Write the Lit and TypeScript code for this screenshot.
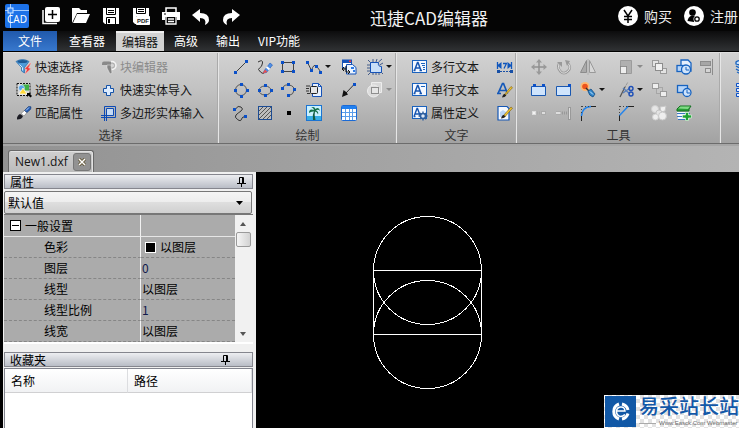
import { LitElement, html, css, svg, nothing, TemplateResult } from "lit";
import { customElement, property } from "lit/decorators.js";
import { classMap } from "lit/directives/class-map.js";

const B = "#0b50c8";
const dots = (pts: number[][]) =>
  pts.map(([x, y]) => svg`<rect x=${x - 1.5} y=${y - 1.5} width="3" height="3" fill=${B}/>`);
const caret = svg`<path d="M0 6h6l-3 3z" fill="currentColor"/>`;

const icons: Record<string, TemplateResult> = {
  filter: svg`<path d="M0 2.500q6.500-4 13 0L8.500 8.500V14l-3-2V8.500z" fill="#4f9bd9" stroke="#2569a8" stroke-width=".7"/><ellipse cx="6.500" cy="2.500" rx="5" ry="1.500" fill="#1e5a94"/><path d="M3.500 5.500l3 3v3" fill="none" stroke="#cdeaff"/><path d="M14.500 4L8.500 10l2.500.5L8.500 15.500l6.500-6-2.500-.5 2.500-5z" fill="#f03838" stroke="#ffd0d0" stroke-width=".4"/>`,
  selectAll: svg`<rect x="1" y="1.500" width="13" height="12" fill="#d8d8d8" stroke="#111" stroke-dasharray="2 1"/><rect x="6" y="2.500" width="7" height="6" fill="#3fb045"/><circle cx="5.500" cy="6" r="3" fill="#58a6e8" stroke="#fff" stroke-width=".5"/><path d="M3 12l4-6 4 6z" fill="#ffd93a" stroke="#fff" stroke-width=".7"/><path d="M11 11h4l-1 1 2 2-1.500 1.500-2-2L11 15z" fill="#000"/>`,
  match: svg`<path d="M1 14.500q-.5-3.500 3-5.500l3 2q-1 3.500-6 3.500z" fill="#1c1c24"/><path d="M5 8.500l3.500-3 2.500 2-3 3.500z" fill="#fff" stroke="#777" stroke-width=".6"/><path d="M8.500 5.500L12.500 1.500l2.500.3-.3 2.400L11 7.500z" fill="#245cb4" stroke="#12356d" stroke-width=".6"/><path d="M10 5.500l3-3" stroke="#b5d5ff"/>`,
  block: svg`<circle cx="11" cy="6.500" r="4" fill="#d5d5d5" stroke="#f4f4f4" stroke-width="1.500"/><circle cx="11" cy="6.500" r="2.500" fill="none" stroke="#aaa"/><path d="M1 4.500q0-2 2-2h7V6H1z" fill="#8a8a8a"/><path d="M6 6h4l1 8-2 1-3-6z" fill="#858585" stroke="#eee" stroke-width=".5"/>`,
  plus: svg`<path d="M5.500 3.500h4v3h3v4h-3v3h-4v-3h-3v-4h3z" fill="#dcecff" stroke="#1552a8"/>`,
  polyIn: svg`<rect x="5.500" y="3.500" width="7" height="7" fill="#c6dbf5"/><path d="M3.500 16V1.500h11v11H0M0 10.500h12.500v-7h-7V16" fill="none" stroke="#0c4ab5"/>`,
  line: svg`<path d="M3 13L13 3" stroke="#444"/>${dots([[2.500, 13.500], [13.500, 2.500]])}`,
  sketch: svg`<path d="M1 3q5-3 4.500 1t-3 5 1 4 4-.5" fill="none" stroke="#333"/><path d="M7 12l6-8 2.500 2-6 7.500-3 .5z" fill="#5090e8" stroke="#1d58b4" stroke-width=".6"/><path d="M9.500 8l3 2.500" stroke="#fff" stroke-width="2"/><path d="M5.500 14.500L8 10.500l2.500 2.500z" fill="#e85050"/>`,
  rect: svg`<rect x="2.500" y="3.500" width="11" height="9" fill="none" stroke="#444"/>${dots([[2.500, 3.500], [13.500, 3.500], [2.500, 12.500], [13.500, 12.500]])}`,
  pline: svg`<path d="M1.500 3.500l4 8q2-7 5-4.500l4 5.500" fill="none" stroke="#444"/>${dots([[1.500, 3.500], [5.500, 11.500], [10.500, 7.500], [14.500, 13.500]])}`,
  insert: svg`<rect x="1.500" y="1" width="9" height="8" fill="#fff" stroke="#1552b8"/><path d="M1 1h10v3H1z" fill="#1552b8"/><rect x="8" y="1.500" width="2" height="1.500" fill="#f33"/><path d="M5.500 5.500h6l3.500 3v6.500H5.500z" fill="#eaf3ff" stroke="#1552b8"/><path d="M1 10h4M5 7v6m0 0H8M3 8l-2 2 2 2M7 11l2 2-2 2" fill="none" stroke="#111"/><path d="M10 8h3v2h-3zm2 3h2v2h-2z" fill="#2f7be5"/>`,
  region: svg`<path d="M3.500 3.500h8q-1 4 3 4v6h-11z" fill="#c9dff8" stroke="#1552b8"/><path d="M3.500 3.500L1 1M6 3V0M9 3l1-3M11.500 3L15 0M12.500 6L16 4M3 6H0M3 9H0M3 12H0M3.500 13.500L1 16M6 14v2M9 14v2M12 14v2M14.500 13.500L16 15" stroke="#1f3f78" stroke-width=".8"/>`,
  circle: svg`<circle cx="8" cy="8" r="5.500" fill="none" stroke="#555"/>${dots([[8.500, 2.500], [2.500, 8.500], [14.500, 8.500], [8.500, 14.500]])}`,
  ellipse: svg`<ellipse cx="8" cy="8.500" rx="6" ry="4.500" fill="none" stroke="#555"/>${dots([[8.500, 3.500], [2.500, 8.500], [14.500, 8.500], [8.500, 13.500]])}`,
  arc: svg`<path d="M2.500 6A6 5 0 0 1 14 8.500Q13.500 12.500 9 13.500" fill="none" stroke="#555"/>${dots([[2.500, 6.500], [8.500, 2.500], [14.500, 7.500], [8.500, 13.500]])}`,
  copyClip: svg`<path d="M6.500 1.500h6l3 3v10h-9z" fill="#e8f1fd" stroke="#1552b8"/><path d="M12.500 1.500v3h3" fill="none" stroke="#1552b8"/><rect x="4.500" y="4.500" width="7" height="7" rx="1" fill="#e6e6e6" stroke="#222"/><path d="M0 4h4M0 6.500h3M0 9h3M1 11.500h3" stroke="#333"/>`,
  arrow: svg`<path d="M5 11l8.500-9" stroke="#333"/><path d="M1 15l1.500-7 2 1.500 1 1 1.500 2z" fill="#111"/><rect x="12" y="1" width="3" height="3" fill=${B}/>`,
  shapes: svg`<path d="M4.500 .5h10v10h-10z" fill="#d8d8d8" stroke="#ededed"/><circle cx="6.500" cy="9" r="6" fill="#dcdcdc" stroke="#eee"/><rect x="4.500" y="5.500" width="7" height="6" fill="#e6e6e6" stroke="#8e8e8e"/>`,
  spline: svg`<path d="M2.500 4Q5 0 8 2t0 4-5 4 1.500 4.500 4-.5 5-2" fill="none" stroke="#333"/>${dots([[1.500, 4.500], [12.500, 11.500]])}`,
  hatch: svg`<rect x="1.500" y="1.500" width="13" height="13" fill="#bdbdbd" stroke="#1c4c94"/><path d="M2 6l4-4M2 10l8-8M2 14L14 2M6 14l8-8M10 14l4-4" stroke="#555"/>`,
  point: svg`<rect x="7" y="6" width="4" height="4" fill="#000"/>`,
  image: svg`<rect x=".5" y=".5" width="15" height="15" fill="#c9f0ff" stroke="#1b74d2"/><path d="M1 11h14v4H1z" fill="#36aee4"/><path d="M8 6q-2 4-1 9h2.500Q8 10 9 6z" fill="#125d42"/><path d="M3 8q0-5 5-3-1-3-3-2 3-2.500 4.500 1Q13 1.500 14 6q-2-2-4-.5 3 1 2 4-1-3-3.500-3Q5 6 3 8z" fill="#147048"/>`,
  table: svg`<rect x=".5" y=".5" width="15" height="15" rx="1" fill="#fff" stroke="#1b6ad5"/><path d="M1 1h14v3H1z" fill="#2180ef"/><path d="M1 7.500h14M1 11.500h14M4.500 4v11M8.500 4v11M11.500 4v11" stroke="#5a9dea"/>`,
  mtext: svg`<rect x=".5" y="1.500" width="14" height="12" fill="#f4f8ff" stroke="#1a62bd"/><path d="M2.500 11.500l3-8h.5l3 8M4 9h4M1.500 11.500h2M7.500 11.500h2.500" fill="none" stroke="#1755b0" stroke-width="1.500"/><path d="M9 4.500h4M10 6.500h3M11 8.500h2M11 10.500h2" stroke="#1a62bd"/>`,
  stext: svg`<rect x=".5" y="1.500" width="14" height="12" fill="#f4f8ff" stroke="#1a62bd"/><path d="M2.500 11.500l3-8h.5l3 8M4 9h4M1.500 11.500h2M7.500 11.500h2.500" fill="none" stroke="#1755b0" stroke-width="1.500"/><path d="M9 4.500h4" stroke="#1a62bd"/>`,
  attr: svg`<rect x=".5" y="1.500" width="14" height="12" fill="#f4f8ff" stroke="#1a62bd"/><path d="M2 11.500l3-8h.5l3 8M3.500 9h4M1.500 11.500h2" fill="none" stroke="#1755b0" stroke-width="1.400"/><circle cx="11" cy="11" r="2.500" fill="#dce8f8" stroke="#2e5f9f" stroke-width="1.500"/><path d="M11 6.500v2M11 13.500v2M6.500 11h2M13.500 11h2M8 8l1.200 1.200M13 13l1.200 1.200M14 8l-1.200 1.200M8 14l1.200-1.200" stroke="#2e5f9f" stroke-width="1.400"/>`,
  dim: svg`<path d="M0 6.500L4.500 3v7zM15 6.500L10.500 3v7z" fill="#0f56bd"/><path d="M.5 3v7M14.500 3v7M6 4.500h3.500L7 9.500" fill="none" stroke="#0f56bd" stroke-width="1.300"/><path d="M0 12.500h3M13 12.500h3" stroke="#174fa6" stroke-width="3"/><path d="M3 12.500h10" stroke="#174fa6" stroke-dasharray="2 1"/>`,
  styleA: svg`<path d="M1 11.500L5.500 1.500h1l4 10M3 8.500h6M0 11.500h4" fill="none" stroke="#1458b9" stroke-width="1.700"/><path d="M7 13l7-8.500 1.500 1.200-7.500 8z" fill="#f2c52c" stroke="#745710" stroke-width=".6"/><path d="M5 15.500q1-4 3-3.500l1.300 1.500Q8 15.500 5 15.500z" fill="#222"/>`,
  styleDoc: svg`<path d="M1 1.500h9l2 2V15H1z" fill="#f5f9ff" stroke="#1557b5" stroke-width="1.200"/><path d="M3 7l3-2 3 2v5H3z" fill="#b9d5f6"/><path d="M6 11l8-9 1.500 1.200-8 9z" fill="#f2c52c" stroke="#745710" stroke-width=".6"/><path d="M4 13.500q1-4 3-3.500l1.500 1.500Q7 13.500 4 13.500z" fill="#222"/>`,
  move: svg`<path d="M8 2v12M2 8h12" stroke="#909090" stroke-width="1.500"/><path d="M8 0l3 3.500H5zM8 16l3-3.500H5zM0 8l3.500-3v6zM16 8l-3.500-3v6z" fill="#999"/>`,
  rotate: svg`<path d="M3 4.500Q1 9 4.500 12.500T12 12t-.5-8" fill="none" stroke="#9a9a9a" stroke-width="2.500"/><path d="M3 4.500Q1 9 4.500 12.500T12 12t-.5-8" fill="none" stroke="#dedede"/><path d="M1 3h5v5zM9 1l5 1-3 5z" fill="#999"/>`,
  mirror: svg`<path d="M6.500 1.500v12H.5z" fill="#aaa" stroke="#8c8c8c"/><path d="M9.500 1.500v12h6z" fill="#d7d7d7" stroke="#999"/><path d="M8 0v16" stroke="#b0b0b0"/>`,
  scale: svg`<path d="M2.500 1.500h11v13h-11z" fill="#b0b0b0" stroke="#9c9c9c"/><rect x="2.500" y="7.500" width="6" height="7" fill="#eee" stroke="#555" stroke-dasharray="1 1"/>`,
  copies: svg`<rect x="1.500" y="1.500" width="6" height="6" fill="#e3e3e3" stroke="#9a9a9a"/><rect x="9.500" y="9.500" width="6" height="5" fill="#e3e3e3" stroke="#9a9a9a"/><rect x="4.500" y="4.500" width="7" height="7" fill="#f0f0f0" stroke="#8c8c8c"/>`,
  order: svg`<rect x="5.500" y="5.500" width="6" height="6" fill="#c4c4c4" stroke="#a6a6a6"/><rect x="1.500" y="1.500" width="6" height="5" fill="#eee" stroke="#9a9a9a"/><rect x="9.500" y="9.500" width="6" height="5" fill="#eee" stroke="#9a9a9a"/>`,
  group1: svg`<path d="M5 1h7l3 3v8H5z" fill="#e5effd" stroke="#1763c0" stroke-width="1.300"/><rect x="1" y="6.500" width="8" height="6" fill="#b5d4f8" stroke="#1763c0" stroke-width="1.300"/><circle cx="10" cy="10.500" r="4.500" fill="#d0e4fb" stroke="#1763c0" stroke-width="1.300"/><path d="M10 8v3h3" fill="none" stroke="#1763c0"/>`,
  group2: svg`<rect x="1.500" y="3.500" width="10" height="7" fill="#b5d4f8" stroke="#1763c0" stroke-width="1.300"/><circle cx="11" cy="10.500" r="4" fill="#d0e4fb" stroke="#1763c0" stroke-width="1.300"/><path d="M11 8v3h3" fill="none" stroke="#1763c0"/>`,
  align: svg`<path d="M13.500 0v16" stroke="#8c8c8c"/><rect x="1.500" y="2.500" width="10" height="4" fill="#a6a6a6" stroke="#8c8c8c"/><rect x="6.500" y="9.500" width="5" height="4" fill="#d5d5d5" stroke="#8c8c8c"/>`,
  stretch: svg`<path d="M.5 4.500h14v9H.5z" fill="#cfe4fc" stroke="#1a58b0"/><path d="M2 2h3v3H2zM11 2h3v3h-3z" fill=${B}/>`,
  stretch2: svg`<path d="M.5 4.500h14v9H.5z" fill="#cfe4fc" stroke="#1a58b0"/><path d="M12 2h3v3h-3z" fill=${B}/>`,
  explode: svg`<circle cx="5" cy="4.500" r="4.500" fill="#ffb870"/><circle cx="5" cy="4.500" r="2.800" fill="#ed531d"/><path d="M6 6l3 3" stroke="#333" stroke-width="1.500"/><path d="M8 9l3-2 4 5-2 3q-4-1-5-6z" fill="#2f83c8" stroke="#154e83" stroke-width=".8"/><path d="M10 9.500l3 3" stroke="#c8ebff"/>`,
  trim: svg`<path d="M2 15L7 5" stroke="#555" stroke-width="1.300"/><path d="M7 5l3-5" stroke="#777" stroke-dasharray="1 1"/><path d="M5 6l7 6M5 11l7-5" stroke="#5b7fb8" stroke-width="1.400"/><circle cx="13" cy="6.500" r="2" fill="none" stroke="#1d4fb8" stroke-width="1.400"/><circle cx="13" cy="12" r="2" fill="none" stroke="#1d4fb8" stroke-width="1.400"/>`,
  breakA: svg`<rect x="1.500" y="6.500" width="3" height="3" fill="#f3f3f3" stroke="#ddd"/><path d="M6 8h4" stroke="#aaa" stroke-width="3" stroke-dasharray="1 1"/><rect x="10.500" y="6.500" width="4" height="3" fill="#ddd" stroke="#aaa"/>`,
  breakB: svg`<path d="M0 6.500h5v3H0" fill="#ddd" stroke="#aaa"/><path d="M6 8h5" stroke="#999" stroke-width="3" stroke-dasharray="1 1"/><rect x="12.500" y="2.500" width="2" height="12" fill="#ddd" stroke="#999"/>`,
  fillet: svg`<path d="M1.500 16v-5M11 1.500h5" stroke="#222"/><path d="M1.500 11Q2 2 11 1.500" fill="none" stroke="#2384ec" stroke-width="1.500"/><path d="M1.500 1v9M2 1.500h8" stroke="#444" stroke-dasharray="1 2"/>`,
  chamfer: svg`<path d="M1.500 16v-6M9 1.500h7" fill="none" stroke="#222"/><path d="M1.500 10.500L10 1.500" stroke="#2384ec" stroke-width="1.500"/><path d="M1.500 1v9M2 1.500h8" stroke="#444" stroke-dasharray="1 2"/>`,
  join: svg`<circle cx="4" cy="4" r="3.500" fill="#e6e6e6" stroke="#cfcfcf"/><path d="M9 2l6-1-1 5-4 1z" fill="#f0f0f0" stroke="#c8c8c8"/><circle cx="8" cy="8" r="3" fill="#e3e3e3" stroke="#c5c5c5"/><circle cx="4.500" cy="12" r="3" fill="#eee" stroke="#cfcfcf"/><circle cx="11.500" cy="11" r="4" fill="#eee" stroke="#c9c9c9"/>`,
  layerAdd: svg`<path d="M1 7h12v8H2z" fill="#f2f7ff"/><path d="M1 8.500h13M1 11.500h8M2 14.500h9" stroke="#3b77c0"/><path d="M1 4l3-3h11l-2 3v2H1z" fill="#299d36" stroke="#157322"/><path d="M2 3.500L4.500 1.500H14L12 4z" fill="#80db86"/><path d="M9.500 7.500h3V10h3v3h-3v2.500h-3V13h-3v-3h3z" fill="#1ea233" stroke="#d9f5dc" stroke-width=".7"/>`,
  layers: svg`<path d="M1 3q3-3 12 0v2q-6 2-12 0zM1 7q6 4 12 0M1 10q6 4 12 0M2 13q5 3 10 0" fill="#c9e0fa" stroke="#1763c0" stroke-width="1.300"/>`,
  list: svg`<path d="M1.500 1.500h3v3h-3zM1.500 6.500h3v3h-3zM1.500 11.500h3v3h-3z" fill="#dceaff" stroke=${B}/><path d="M7 3h8M7 8h8M7 13h8" stroke=${B}/>`,
  new: svg`<rect x="3" y="0" width="15" height="15" rx="2" fill="#fff"/><path d="M10.500 3v9M6 7.500h9" stroke="#000" stroke-width="1.500"/><path d="M1 3v13.500h14" fill="none" stroke="#fff" stroke-width="1.500"/>`,
  open: svg`<path d="M0 16V1h7l2 2h6v3H5z" fill="#fff"/><path d="M5 7h13l-4 9H1z" fill="#fff"/>`,
  save: svg`<path d="M1 1h16v16H3l-2-2z" fill="#fff"/><path d="M4.500 1v6.500h9V1M4.500 17v-6.500h9V17" fill="none" stroke="#000"/><path d="M6 3.500h6M6 5.500h6" stroke="#000"/><path d="M6 12h2v4H6z" fill="#000"/>`,
  saveAs: svg`<path d="M1 1h16v8H1zM1 9h3v8H3l-2-2z" fill="#fff"/><path d="M4.500 1v5.500h9V1M6 2.500h6M6 4.500h6" fill="none" stroke="#000"/><path d="M4.500 9.500h13v8h-13z" fill="#fff" stroke="#fff"/><text x="5" y="16" font-size="6" font-weight="700" font-family="Liberation Sans, sans-serif" fill="#222">PDF</text>`,
  print: svg`<path d="M4 5V1h10v4" fill="none" stroke="#fff" stroke-width="1.500"/><path d="M0 5h18v8h-3v-3H3v3H0z" fill="#fff"/><path d="M4 10v7h10v-7M6 12h6M6 14.500h6" fill="none" stroke="#fff" stroke-width="1.300"/><path d="M2 7h2" stroke="#000"/>`,
  undo: svg`<path d="M0 8l8-6v4q9 0 9 7 0 3-4 5 2-7-5-7v4z" fill="#fff"/>`,
  redo: svg`<path d="M18 8l-8-6v4q-9 0-9 7 0 3 4 5-2-7 5-7v4z" fill="#fff"/>`,
};

@customElement("cad-icon")
class CadIcon extends LitElement {
  static styles = css`
    :host { display: inline-flex; }
    svg { display: block; overflow: visible; }
  `;
  @property() name = "";
  @property({ type: Number }) size = 16;
  render() {
    return html`<svg width=${this.size} height=${this.size} viewBox="0 0 ${this.size} ${this.size}" aria-hidden="true">${icons[this.name]}</svg>`;
  }
}

interface Tool { icon: string; label: string; text?: boolean; menu?: boolean; off?: boolean; }
const t = (icon: string, label: string, opt: Partial<Tool> = {}): Tool => ({ icon, label, ...opt });
const T = { text: true };
const M = { menu: true };

const groups: { name: string; kind: string; tools: (Tool | null)[] }[] = [
  { name: "选择", kind: "select", tools: [
    t("filter", "快速选择", T), t("block", "块编辑器", { text: true, off: true }),
    t("selectAll", "选择所有", T), t("plus", "快速实体导入", T),
    t("match", "匹配属性", T), t("polyIn", "多边形实体输入", T)] },
  { name: "绘制", kind: "draw", tools: [
    t("line", "直线"), t("sketch", "草图"), t("rect", "矩形"), t("pline", "多段线", M), t("insert", "插入块"), t("region", "面域", M),
    t("circle", "圆"), t("ellipse", "椭圆"), t("arc", "圆弧"), t("copyClip", "粘贴"), t("arrow", "箭头"), t("shapes", "形状", { menu: true, off: true }),
    t("spline", "样条"), t("hatch", "填充"), t("point", "点"), t("image", "图像"), t("table", "表格"), null] },
  { name: "文字", kind: "text", tools: [
    t("mtext", "多行文本", T), t("dim", "标注"),
    t("stext", "单行文本", T), t("styleA", "文字样式"),
    t("attr", "属性定义", T), t("styleDoc", "编辑样式")] },
  { name: "工具", kind: "tool", tools: [
    t("move", "移动"), t("rotate", "旋转"), t("mirror", "镜像"), t("scale", "缩放", { menu: true, off: true }), t("copies", "复制"), t("group1", "编组"), t("align", "对齐"),
    t("stretch", "拉伸"), t("stretch2", "延伸"), t("explode", "分解", M), t("trim", "修剪", M), t("order", "次序"), t("group2", "取消编组"), null,
    t("breakA", "打断"), t("breakB", "连接"), t("fillet", "圆角"), t("chamfer", "倒角"), t("join", "合并"), t("layerAdd", "添加图层"), null] },
  { name: "", kind: "more", tools: [t("layers", "图层"), t("list", "列表")] },
];

@customElement("cad-ribbon")
class CadRibbon extends LitElement {
  static styles = css`
    :host { display: flex; overflow: hidden; background: linear-gradient(#d2d2d2, #c2c2c2 40%, #a2a2a2); border-top: 1px solid #dedede; border-bottom: 1px solid #6c6c6c; }
    .group { flex: none; box-sizing: border-box; padding-top: 2px; border-right: 1px solid #e6e6e6; box-shadow: inset -1px 0 #aaa; }
    .more { border: 0; box-shadow: none; }
    .tools { display: grid; grid-auto-rows: 23px; align-items: center; }
    .select { width: 216px; }
    .select .tools { grid-template-columns: 85px 1fr; padding-left: 13px; }
    .draw { width: 178px; }
    .draw .tools { grid-template-columns: 24px 23px 26px 35px 26px 1fr; padding-left: 14px; }
    .text { width: 120px; }
    .text .tools { grid-template-columns: 85px 1fr; padding-left: 15px; }
    .tool { width: 204px; }
    .tool .tools { grid-template-columns: 25px 24px 38px 33px 25px 23px 1fr; padding-left: 14px; }
    .more { width: 120px; }
    .more .tools { padding-left: 14px; }
    button { display: flex; align-items: center; gap: 3px; padding: 0; border: 0; background: none; font: 12px/16px "Noto Sans CJK SC", sans-serif; color: #151515; white-space: nowrap; }
    .off { color: #8b8b8b; }
    .caret { display: block; }
    h2 { margin: 3px 0 0; font: 12px/16px "Noto Sans CJK SC", sans-serif; color: #333; text-align: center; }
  `;
  render() {
    return groups.map((g) => html`
      <section class="group ${g.kind}">
        <div class="tools">
          ${g.tools.map((x) => x ? html`
            <button class=${classMap({ off: !!x.off })} aria-label=${x.label} ?disabled=${x.off}>
              <cad-icon name=${x.icon}></cad-icon>
              ${x.text ? html`<span>${x.label}</span>` : nothing}
              ${x.menu ? html`<svg class="caret" width="6" height="16" aria-hidden="true">${caret}</svg>` : nothing}
            </button>` : html`<span></span>`)}
        </div>
        ${g.name ? html`<h2>${g.name}</h2>` : nothing}
      </section>`);
  }
}

const pin = html`<svg width="9" height="10" viewBox="0 0 9 10" aria-hidden="true"><path d="M2.500 6V.5h4V6M5.500 0v6M0 6.500h9M4.500 7v3" fill="none" stroke="#000"/></svg>`;

const props: [string, string][] = [["色彩", "以图层"], ["图层", "0"], ["线型", "以图层"], ["线型比例", "1"], ["线宽", "以图层"]];

@customElement("cad-sidebar")
class CadSidebar extends LitElement {
  static styles = css`
    :host { display: flex; flex-direction: column; box-sizing: border-box; background: #f0f0f0; padding: 2px 3px 0 1px; font: 12px/16px "Noto Sans CJK SC", sans-serif; color: #000; }
    button { padding: 0; border: 0; background: none; display: flex; color: inherit; }
    .bar { display: flex; align-items: center; justify-content: space-between; box-sizing: border-box; height: 15px; border: 1px solid #85868e; background: linear-gradient(#edeef1, #b9bdc6); padding: 0 6px 0 5px; }
    .bar h2 { margin: 0; font: inherit; }
    .fav { margin-top: 8px; padding-right: 22px; }
    .combo { display: grid; grid-template-columns: 1fr 16px; align-items: center; margin: 2px 1px 0 0; }
    .combo select { grid-area: 1 / 1 / 2 / 3; appearance: none; height: 23px; margin: 0; padding: 0 3px; border: 1px solid #777; border-radius: 2px; background: linear-gradient(#f5f5f5, #ededed 48%, #dedede 50%, #d0d0d0); font: inherit; color: #000; }
    .combo svg { grid-area: 1 / 2; pointer-events: none; }
    .sheet { display: flex; border-top: 1px solid #777; border-bottom: 2px solid #fff; }
    table { border-collapse: separate; border-spacing: 0; table-layout: fixed; }
    .props { flex: 1; background: #ababab; }
    .props td, .props th { box-sizing: border-box; height: 21px; padding: 0 1px; font-weight: 400; text-align: left; line-height: 16px; white-space: nowrap; border-bottom: 1px dashed #868686; }
    .props th { width: 137px; padding-left: 40px; border-right: 1px solid #f1f1f1; }
    .props .head th, .props .head td { height: 22px; border-bottom: 1px solid #e5e5e5; }
    .props .head th { padding-left: 6px; }
    .fold { display: flex; align-items: center; gap: 4px; font: inherit; }
    .cell { display: flex; align-items: center; gap: 4px; }
    .num { color: #111a4c; }
    .swatch { width: 9px; height: 9px; margin-left: 3px; background: #000; border: 1px solid #fff; }
    .scroll { width: 18px; background: #f1f1f1; display: flex; flex-direction: column; align-items: center; padding: 7px 2px 6px 0; box-sizing: border-box; }
    .thumb { width: 13px; height: 13px; margin-top: 6px; border: 1px solid #9a9a9a; border-radius: 2px; background: linear-gradient(90deg, #f5f5f5, #d2d2d2); }
    .space { flex: 1; }
    .files { flex: 1; margin-top: 1px; background: #fff; border: solid #82848e; border-width: 1px 1px 0; }
    .files table { width: 100%; }
    .files th { box-sizing: border-box; height: 24px; padding: 0 6px; font-weight: 400; text-align: left; background: linear-gradient(#fff, #f1f2f4); border-right: 1px solid #dcdde0; border-bottom: 1px solid #d0d0d2; }
    .files .name { width: 123px; }
  `;
  render() {
    return html`
      <div class="bar"><h2>属性</h2><button aria-label="固定">${pin}</button></div>
      <div class="combo">
        <select aria-label="默认值"><option>默认值</option></select>
        <svg width="7" height="4" aria-hidden="true"><path d="M0 0h7L3.500 4z"/></svg>
      </div>
      <div class="sheet">
        <table class="props">
          <tr class="head"><th><button class="fold"><svg width="11" height="11" aria-hidden="true"><rect x=".5" y=".5" width="10" height="10" fill="#fff" stroke="#000"/><path d="M2 5.500h7" stroke="#000"/></svg>一般设置</button></th><td></td></tr>
          ${props.map(([k, v], i) => html`<tr><th scope="row">${k}</th><td>
            <span class=${classMap({ cell: true, num: v.length === 1 })}>${i === 0 ? html`<i class="swatch"></i>` : nothing}${v}</span></td></tr>`)}
        </table>
        <div class="scroll">
          <button aria-label="向上"><svg width="6" height="4"><path d="M3 0l3 4H0z" fill="#555"/></svg></button>
          <div class="thumb"></div><div class="space"></div>
          <button aria-label="向下"><svg width="6" height="4"><path d="M0 0h6L3 4z" fill="#555"/></svg></button>
        </div>
      </div>
      <div class="bar fav"><h2>收藏夹</h2><button aria-label="固定">${pin}</button></div>
      <div class="files"><table><tr><th class="name">名称</th><th>路径</th></tr></table></div>`;
  }
}

const quick: [string, string][] = [["new", "新建"], ["open", "打开"], ["save", "保存"], ["saveAs", "另存为"], ["print", "打印"], ["undo", "撤销"], ["redo", "重做"]];
const tabs = ["文件", "查看器", "编辑器", "高级", "输出", "VIP功能"];

@customElement("app-root")
class AppRoot extends LitElement {
  static styles = css`
    :host { display: flex; flex-direction: column; min-height: 100vh; background: #000; font: 12px/16px "Noto Sans CJK SC", sans-serif; overflow: hidden; }
    button { padding: 0; border: 0; background: none; font: inherit; color: #fff; display: flex; align-items: center; white-space: nowrap; }
    header { display: flex; align-items: center; height: 31px; padding-left: 5px; background: #050505; }
    .logo { display: block; margin-right: 13px; }
    .quick { display: flex; gap: 12px; }
    h1 { flex: 1; margin: 5px 0 0; font: 17px/24px "Noto Sans CJK SC", sans-serif; color: #f2f2f2; text-align: center; }
    .account { display: flex; gap: 12px; padding-right: 1px; font-size: 14px; }
    .account button { gap: 6px; color: #eee; }
    .tabs { display: flex; height: 20px; margin-left: 3px; background: linear-gradient(#0c0c0d, #303234); border-bottom: 1px solid #000; }
    .tab { justify-content: center; padding: 0 9px; }
    .file { width: 54px; background: linear-gradient(#2059ac, #3878cd); margin-right: 3px; }
    .active { width: 48px; padding: 0 6px; margin: 0 1px 0 2px; box-sizing: border-box; background: #d2d2d2; color: #111; border-top: 2px solid #eee; }
    .work { display: flex; flex-direction: column; flex: 1; margin-left: 3px; }
    .docs { display: flex; align-items: flex-end; box-sizing: border-box; height: 28px; padding-left: 5px; background: linear-gradient(90deg, #929292, #b4b4b4); border-top: 2px solid #a6a6a6; }
    .doc { display: flex; align-items: center; gap: 5px; box-sizing: border-box; height: 22px; padding: 0 2px 0 6px; border: 1px solid #686868; border-bottom: 0; border-radius: 3px 3px 0 0; background: linear-gradient(#d0d0d0, #bcbcbc); color: #151515; font: 12px/16px "Open Sans", "Noto Sans", sans-serif; box-shadow: inset -1px 1px #e2e2e2; }
    .close { box-sizing: border-box; width: 18px; height: 18px; justify-content: center; border: 1px solid #777; border-radius: 3px; background: #929292; }
    .body { flex: 1; display: grid; grid-template-columns: 253px 1fr; }
    .canvas { position: relative; background: #000; padding: 43px 0 0 117px; }
    .drawing { display: block; }
    .mark { position: absolute; right: 0; bottom: 0; display: flex; align-items: center; gap: 3px; box-sizing: border-box; padding: 1px 0 1px 1px; background: repeating-conic-gradient(#e2e2e2 0 25%, #fff 0 50%) 0 0 / 8px 8px; }
    .badge { display: block; }
    .words { display: flex; flex-direction: column; color: #1258a8; }
    .cn { font: 500 20px/23px "Liberation Sans", "Noto Sans CJK SC", sans-serif; white-space: nowrap; }
    .en { display: flex; align-items: center; gap: 3px; font: 6px/8px "Liberation Sans", sans-serif; color: #6b6b6b; white-space: nowrap; }
    .en::before { content: ""; width: 17px; height: 1px; background: #aaa; }
  `;
  render() {
    return html`
      <header>
        <svg class="logo" width="24" height="24" role="img" aria-label="CAD"><rect width="24" height="24" rx="2" fill="#1d72e8"/><path d="M0 6.500h24M5.500 0v24" stroke="#a5cdff"/><rect x="3" y="4" width="5" height="5" fill="#3a8af5" stroke="#d5e8ff"/><text x="12" y="19" text-anchor="middle" font-size="10" font-family="Noto Sans, sans-serif" fill="#fff">CAD</text></svg>
        <nav class="quick">${quick.map(([n, l]) => html`<button aria-label=${l}><cad-icon name=${n} .size=${18}></cad-icon></button>`)}</nav>
        <h1>迅捷CAD编辑器</h1>
        <div class="account">
          <button><svg width="20" height="20" aria-hidden="true"><circle cx="10" cy="10" r="10" fill="#fff"/><path d="M6 4l4 6 4-6M10 10v7M6 10.500h8M6 13.500h8" fill="none" stroke="#000" stroke-width="1.500"/></svg>购买</button>
          <button><svg width="20" height="20" aria-hidden="true"><circle cx="10" cy="10" r="10" fill="#fff"/><circle cx="8.500" cy="6.500" r="3.300"/><path d="M3.500 15q.5-4 4-5.500h3l1 1-1.500 5.500z"/><circle cx="13" cy="13" r="3.500" fill="#fff"/><circle cx="13" cy="13" r="2.200" fill="none" stroke="#000" stroke-width="1.300"/></svg>注册</button>
        </div>
      </header>
      <nav class="tabs">${tabs.map((x, i) => html`<button class=${classMap({ tab: true, file: i === 0, active: i === 2 })}>${x}</button>`)}</nav>
      <main class="work">
        <cad-ribbon></cad-ribbon>
        <div class="docs"><div class="doc"><span>New1.dxf</span><button class="close" aria-label="关闭"><svg width="8" height="8" aria-hidden="true"><path d="M1 1l6 6M7 1L1 7" stroke="#594b24" stroke-width="3"/><path d="M1 1l6 6M7 1L1 7" stroke="#fff" stroke-width="1.500"/></svg></button></div></div>
        <div class="body">
          <cad-sidebar></cad-sidebar>
          <section class="canvas">
            <svg class="drawing" width="110" height="174" shape-rendering="crispEdges" fill="none" stroke="#fff" role="img" aria-label="图形"><circle cx="54.500" cy="55.500" r="54"/><circle cx="54.500" cy="119.500" r="54"/><rect x=".5" y="55.500" width="108" height="64"/></svg>
            <div class="mark">
              <svg class="badge" width="31" height="31" aria-hidden="true"><rect width="31" height="31" fill="#1158a6"/><path d="M14 8a8 8 0 0 0 0 15M17 8a8 8 0 0 1 6 6M23 17.500a8 8 0 0 1-6 5.500" fill="none" stroke="#fff" stroke-width="3"/><path d="M20 18.500q-2 2-4.500 2-4-1-4-5t4-4.500 4.500 4H12" fill="none" stroke="#fff" stroke-width="1.500"/></svg>
              <div class="words"><span class="cn">易采站长站</span><span class="en">Www.Easck.Com Webmaster</span></div>
            </div>
          </section>
        </div>
      </main>`;
  }
}
